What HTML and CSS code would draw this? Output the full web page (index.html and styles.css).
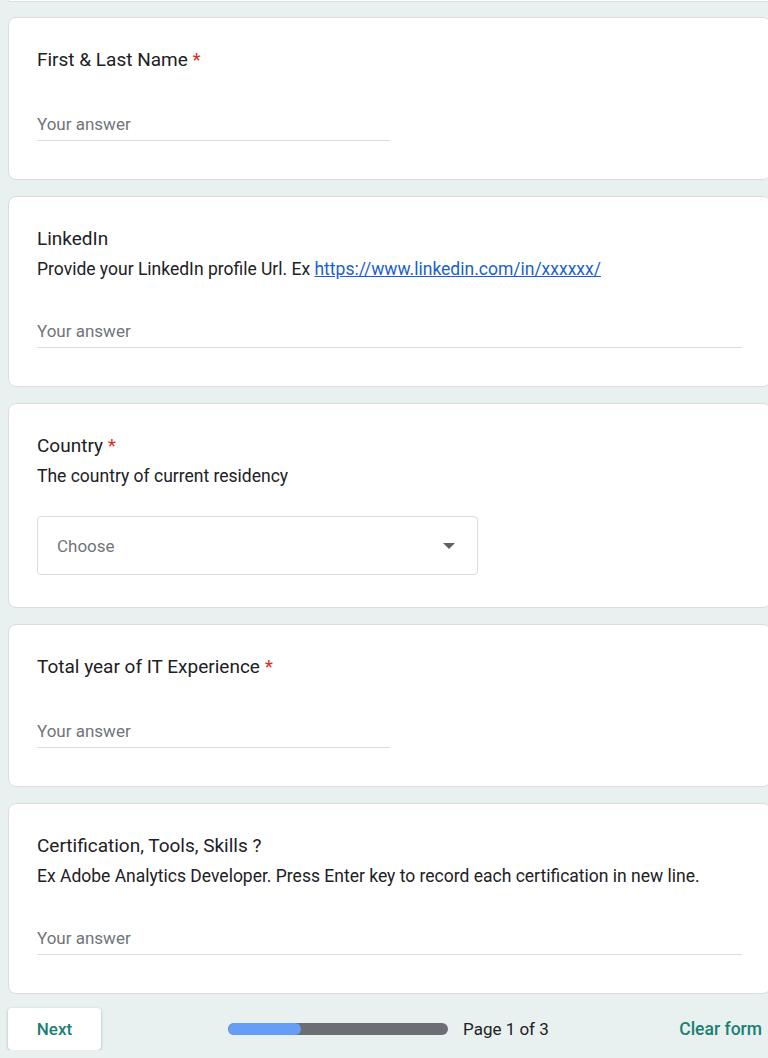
FILE: index.html
```html
<!DOCTYPE html>
<html lang="en">
<head>
    <meta charset="UTF-8">
    <meta name="viewport" content="width=device-width, initial-scale=1.0">
    <title>Application Form</title>
    <link rel="stylesheet" href="styles.css">
</head>
<body>

    <div class="form-page">
        <div class="card-tail"></div>

        <div class="card">
            <div class="q-title">First &amp; Last Name <span class="req">*</span></div>
            <div class="answer short">
                <input type="text" placeholder="Your answer">
            </div>
        </div>

        <div class="card">
            <div class="q-title">LinkedIn</div>
            <div class="q-desc">Provide your LinkedIn profile Url. Ex <a href="#">https://www.linkedin.com/in/xxxxxx/</a></div>
            <div class="answer">
                <input type="text" placeholder="Your answer">
            </div>
        </div>

        <div class="card">
            <div class="q-title">Country <span class="req">*</span></div>
            <div class="q-desc">The country of current residency</div>
            <div class="select">
                <span>Choose</span>
                <svg width="12" height="6" viewBox="0 0 12 6"><path d="M0 0h12L6 6z" fill="#5f6368"/></svg>
            </div>
        </div>

        <div class="card">
            <div class="q-title">Total year of IT Experience <span class="req">*</span></div>
            <div class="answer short">
                <input type="text" placeholder="Your answer">
            </div>
        </div>

        <div class="card">
            <div class="q-title">Certification, Tools, Skills ?</div>
            <div class="q-desc">Ex Adobe Analytics Developer. Press Enter key to record each certification in new line.</div>
            <div class="answer">
                <input type="text" placeholder="Your answer">
            </div>
        </div>

        <div class="footer">
            <button class="next-btn">Next</button>
            <div class="progress">
                <div class="bar"><div class="fill" style="width: 33%"></div></div>
                <span>Page 1 of 3</span>
            </div>
            <a href="#" class="clear">Clear form</a>
        </div>
    </div>

</body>
</html>
```

FILE: styles.css
```css
* {
    margin: 0;
    padding: 0;
    box-sizing: border-box;
    font-family: Roboto, Arial, sans-serif;
}

body {
    background: #e8f1ef;
    overflow: hidden;
    color: #202124;
}

.form-page {
    width: 763px;
    margin-left: 8px;
}

.card-tail {
    height: 2px;
    background: white;
    border: 1px solid #dadce0;
    border-top: none;
    border-radius: 0 0 8px 8px;
    margin-bottom: 15px;
}

.card {
    background: white;
    border: 1px solid #dadce0;
    border-radius: 8px;
    padding: 28px 28px;
    margin-bottom: 16px;
}

.q-title {
    font-size: 19px;
    line-height: 28px;
    color: #202124;
}

.req {
    color: #d93025;
}

.q-desc {
    font-size: 17.5px;
    line-height: 23px;
    height: 23px;
    margin-top: 5px;
}

.q-desc a {
    color: #1a5fd0;
}

.answer {
    margin: 30px 0 10px;
    padding-top: 8px;
}

.answer.short {
    width: 50%;
}

.answer input {
    width: 100%;
    border: none;
    border-bottom: 1px solid #dadce0;
    padding: 0 0 4px;
    font-size: 17px;
    line-height: 24px;
    height: 29px;
    outline: none;
    color: #202124;
}

.answer input::placeholder {
    color: #70757a;
}

.select {
    width: 441px;
    height: 59px;
    margin: 28px 0 4px;
    border: 1px solid #dadce0;
    border-radius: 4px;
    display: flex;
    align-items: center;
    justify-content: space-between;
    padding: 0 22px 0 19px;
    font-size: 17px;
    color: #70757a;
}

.footer {
    display: flex;
    align-items: center;
    margin-top: -2px;
}

.next-btn {
    width: 93px;
    height: 42px;
    background: white;
    border: none;
    border-radius: 4px;
    box-shadow: 0 1px 3px rgba(60, 64, 67, 0.35);
    color: #1a7f74;
    font-size: 17px;
    font-weight: 500;
    cursor: pointer;
}

.progress {
    display: flex;
    align-items: center;
    margin-left: 127px;
    font-size: 17px;
    color: #202124;
}

.bar {
    width: 220px;
    height: 12px;
    border-radius: 6px;
    background: #6b6e73;
    margin-right: 15px;
    overflow: hidden;
}

.fill {
    height: 100%;
    background: #669df6;
    border-radius: 6px;
}

.clear {
    margin-left: auto;
    margin-right: 9px;
    color: #1a7f74;
    font-size: 17.5px;
    font-weight: 500;
    text-decoration: none;
}
```
